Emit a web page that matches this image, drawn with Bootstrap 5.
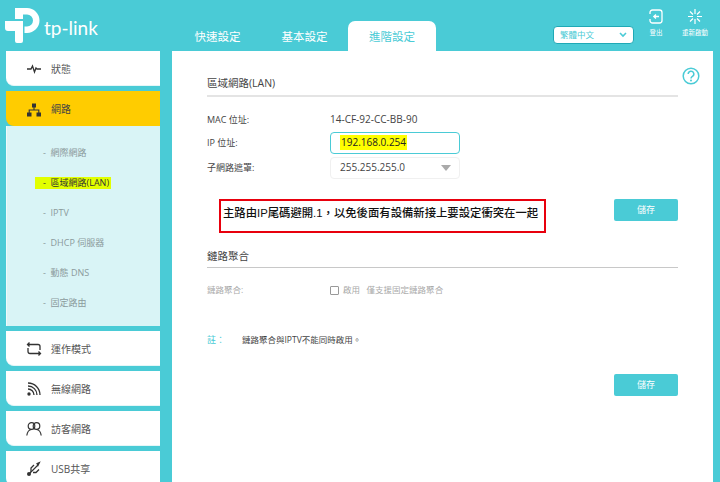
<!DOCTYPE html>
<html lang="zh-Hant">
<head>
  <meta charset="UTF-8">
  <meta name="viewport" content="width=device-width, initial-scale=1">
  <title>區域網路(LAN)</title>
  <link href="https://cdn.jsdelivr.net/npm/bootstrap@5.3.0/dist/css/bootstrap.min.css" rel="stylesheet">
  <style>
    html, body { height: 482px; overflow: hidden; }
    body { background: #4acbd6; font-family: "Open Sans", "Noto Sans CJK TC", sans-serif; font-size: 10px; color: #444; position: relative; }

    /* header */
    .top-bar { height: 51px; }
    .logo-box { width: 174px; flex-shrink: 0; }
    .logo-text { font-family: Lato, "Open Sans", sans-serif; font-size: 19px; line-height: 20px; color: #fff; margin: 18px 0 0 4px; }
    .tab-row { width: 263px; flex-shrink: 0; }
    .tab-item { color: #fff; font-size: 11.5px; height: 30px; line-height: 32px; text-align: center; width: 87px; margin-top: 21px; white-space: nowrap; }
    .tab-item.tab-on { background: #fff; color: #4acbd6; border-radius: 7px 7px 0 0; width: 88px; }
    .lang-box { width: 81px; height: 18px; margin: 26px 0 0 116px; flex-shrink: 0; background: #fff; border: 1px solid #1fa9b6; border-radius: 4px; color: #4acbd6; font-size: 8.5px; line-height: 16px; padding: 0 6px; }
    .top-icon { color: #fff; font-size: 6.5px; line-height: 9px; text-align: center; flex-shrink: 0; }
    .top-logout { width: 30px; margin: 9px 0 0 7px; }
    .top-reboot { width: 40px; margin: 9px 0 0 4px; }

    /* sidebar */
    .page-row { height: 431px; }
    .side-col { width: 154px; margin-left: 6px; gap: 5px; flex-shrink: 0; }
    .side-item { height: 35px; background: #fff; border-radius: 0 0 0 8px; border-bottom: 1px solid #e4f7f8; padding: 2px 0 0 20px; gap: 9px; color: #555; font-size: 10px; flex-shrink: 0; }
    .side-icon { width: 16px; height: 16px; flex-shrink: 0; }
    .side-item.side-on { background: #fc0; color: #444; border-bottom: 0; margin-bottom: -5px; }
    .side-sub { height: 200px; background: #d9f4f6; border-left: 1px solid #eefafb; padding: 12px 0 0 28px; flex-shrink: 0; }
    .sub-link { height: 30px; line-height: 30px; color: #8b9a9c; font-size: 9px; white-space: nowrap; }
    .sub-link span { display: inline-block; line-height: 12px; padding: 0 2px 0 8px; }
    .sub-link .sub-mark { background: #e2ff00; color: #333; }

    /* main panel */
    .main-panel { width: 541px; margin-left: 12px; background: #fff; position: relative; padding: 24px 35px 0; }
    .help-mark { position: absolute; left: 510px; top: 16px; width: 18px; height: 18px; }
    .sec-title { font-size: 10.5px; color: #444; line-height: 16px; padding-bottom: 4px; border-bottom: 2px solid #e4e4e4; }
    .sec-title.sec-two { border-bottom: 1px solid #c8c8c8; padding-bottom: 3px; margin-top: 15px; }
    .form-line { height: 25px; }
    .field-name { width: 123px; font-size: 9px; color: #444; flex-shrink: 0; }
    .field-box { width: 130px; height: 22px; border: 1px solid #f0f0f0; border-radius: 4px; padding: 0 9px; font-size: 10px; color: #444; }
    .field-box.field-on { border-color: #4acbd6; color: #222; }
    .ip-mark { background: #ff0; padding: 0 1px; }
    .arrow-down { width: 0; height: 0; border-left: 5px solid transparent; border-right: 5px solid transparent; border-top: 6px solid #aaa; margin-right: -1px; }
    .note-wrap { margin-top: 19px; }
    .note-red { width: 327px; height: 34px; margin: 0 0 0 12px; border: 2px solid #e8000d; color: #111; font-family: "Liberation Sans", "Noto Sans CJK TC", sans-serif; font-size: 11.350px; font-weight: 500; line-height: 25px; padding-left: 2px; white-space: nowrap; flex-shrink: 0; }
    .save-btn { width: 64px; height: 22px; padding: 0; background: #4acbd6; border: 0; border-radius: 2px; color: #fff; font-size: 9px; line-height: 22px; }
    .save-btn:hover { background: #4acbd6; color: #fff; }
    .box-tick { width: 9px; height: 9px; border: 1px solid #999; border-radius: 1px; margin-right: 4px; }
    .dim-text { color: #aaa; font-size: 8.5px; white-space: nowrap; }
    .agg-line { margin-top: 10px; }
    .note-line { margin-top: 29px; height: 16px; }
    .note-key { width: 35px; color: #4acbd6; font-size: 9px; }
    .note-txt { font-size: 8.5px; color: #444; }
    .save-line { margin-top: 26px; }
  </style>
</head>
<body>

  <!-- header -->
  <div class="top-bar d-flex">
    <div class="logo-box d-flex">
      <svg width="40" height="45" viewBox="0 0 40 45">
        <path fill="#fff" d="M15 8H27A12.500 12.500 0 0 1 27 33H24.500V26.500H27A6 6 0 0 0 27 14.500H23V19H15Z"/>
        <path fill="#fff" d="M5 21H23V41Q23 43 21 43H17Q15 43 15 41V31H8Q5 31 5 28Z"/>
      </svg>
      <div class="logo-text">tp-link</div>
    </div>
    <div class="tab-row d-flex">
      <div class="tab-item">快速設定</div>
      <div class="tab-item">基本設定</div>
      <div class="tab-item tab-on">進階設定</div>
    </div>
    <div class="lang-box d-flex justify-content-between align-items-center">
      <span>繁體中文</span>
      <svg width="8" height="6" viewBox="0 0 8 6"><path d="M1 1l3 3 3-3" fill="none" stroke="#4acbd6" stroke-width="1.600"/></svg>
    </div>
    <div class="top-icon top-logout">
      <svg class="d-block mx-auto" width="14" height="15" viewBox="0 0 14 15"><rect x="1" y="1" width="12" height="13" rx="2.500" fill="none" stroke="#fff" stroke-width="1.300"/><path d="M0 5h2v5H0z" fill="#4acbd6"/><path d="M10 7.500H5M7 5.500l-2.200 2 2.200 2" fill="none" stroke="#fff" stroke-width="1.300"/></svg>
      <div class="mt-1">登出</div>
    </div>
    <div class="top-icon top-reboot">
      <svg class="d-block mx-auto" width="16" height="15" viewBox="0 0 16 15"><path d="M8 0v5M8 10v5M1 7.500h5M10 7.500h5M3 2.500l3 3M10 9.500l3 3M13 2.500l-3 3M6 9.500l-3 3" stroke="#fff" stroke-width="1.200"/></svg>
      <div class="mt-1">重新啟動</div>
    </div>
  </div>

  <div class="page-row d-flex">
    <!-- sidebar -->
    <div class="side-col d-flex flex-column">
      <div class="side-item d-flex align-items-center">
        <svg class="side-icon" viewBox="0 0 16 16"><path d="M1 8h4l1.500-3 2 6 1.500-4 1 1h4" fill="none" stroke="#333" stroke-width="1.300"/></svg>
        <span>狀態</span>
      </div>
      <div class="side-item side-on d-flex align-items-center">
        <svg class="side-icon" viewBox="0 0 16 16"><path d="M6 1.500h4v4H6zM1 10.500h4.500v4H1zM10.500 10.500H15v4h-4.500z" fill="#333"/><path d="M8 5v3M3.200 11V8h9.600v3" fill="none" stroke="#333" stroke-width="1.100"/></svg>
        <span>網路</span>
      </div>
      <div class="side-sub">
        <div class="sub-link"><span>-&nbsp; 網際網路</span></div>
        <div class="sub-link"><span class="sub-mark">-&nbsp; 區域網路(LAN)</span></div>
        <div class="sub-link"><span>-&nbsp; IPTV</span></div>
        <div class="sub-link"><span>-&nbsp; DHCP 伺服器</span></div>
        <div class="sub-link"><span>-&nbsp; 動態 DNS</span></div>
        <div class="sub-link"><span>-&nbsp; 固定路由</span></div>
      </div>
      <div class="side-item d-flex align-items-center">
        <svg class="side-icon" viewBox="0 0 16 16"><path d="M3.500 1.500L1.500 3.500l2 2M2 3.500h10q2 0 2 2V9M12.500 14.500l2-2-2-2M14 12.500H4q-2 0-2-2V7" fill="none" stroke="#333" stroke-width="1.300"/></svg>
        <span>運作模式</span>
      </div>
      <div class="side-item d-flex align-items-center">
        <svg class="side-icon" viewBox="0 0 16 16"><circle cx="3" cy="13" r="1.700" fill="#333"/><path d="M2 8a6 6 0 0 1 6 6M2 5a9 9 0 0 1 9 9M2 2a12 12 0 0 1 12 12" fill="none" stroke="#333" stroke-width="1.300"/></svg>
        <span>無線網路</span>
      </div>
      <div class="side-item d-flex align-items-center">
        <svg class="side-icon" viewBox="0 0 16 16"><circle cx="5.500" cy="5" r="3.300" fill="none" stroke="#333" stroke-width="1.200"/><circle cx="10.500" cy="5" r="3.300" fill="none" stroke="#333" stroke-width="1.200"/><path d="M.8 14.500Q1.500 9 5.500 8.500M15.200 14.500Q14.500 9 10.500 8.500" fill="none" stroke="#333" stroke-width="1.200"/></svg>
        <span>訪客網路</span>
      </div>
      <div class="side-item d-flex align-items-center">
        <svg class="side-icon" viewBox="0 0 16 16"><path d="M13.500 1.500l-2.500 1 1 2zM3 13l9-9" fill="#333" stroke="#333" stroke-width="1.200"/><path d="M5 11V7l3-3M7 11.500h3l3-3" fill="none" stroke="#333" stroke-width="1.300"/><circle cx="3" cy="13" r="2" fill="#333"/></svg>
        <span>USB共享</span>
      </div>
    </div>

    <!-- main panel -->
    <div class="main-panel">
      <svg class="help-mark" viewBox="0 0 18 18"><circle cx="9" cy="9" r="7.800" fill="none" stroke="#4acbd6" stroke-width="1.500"/><path d="M6.200 7a2.800 2.800 0 1 1 4.200 2.400Q9 10.200 9 11.500" fill="none" stroke="#4acbd6" stroke-width="1.500"/><circle cx="9" cy="13.500" r="1" fill="#4acbd6"/></svg>

      <div class="sec-title">區域網路(LAN)</div>
      <div class="form-line d-flex align-items-center mt-2 pt-1">
        <div class="field-name">MAC 位址:</div>
        <div>14-CF-92-CC-BB-90</div>
      </div>
      <div class="form-line d-flex align-items-center">
        <div class="field-name">IP 位址:</div>
        <div class="field-box field-on d-flex align-items-center"><span class="ip-mark">192.168.0.254</span></div>
      </div>
      <div class="form-line d-flex align-items-center">
        <div class="field-name">子網路遮罩:</div>
        <div class="field-box d-flex align-items-center justify-content-between"><span>255.255.255.0</span><i class="arrow-down"></i></div>
      </div>

      <div class="note-wrap d-flex justify-content-between align-items-start">
        <div class="note-red">主路由IP尾碼避開.1，以免後面有設備新接上要設定衝突在一起</div>
        <button class="btn save-btn" type="button">儲存</button>
      </div>

      <div class="sec-title sec-two">鏈路聚合</div>
      <div class="form-line agg-line d-flex align-items-center">
        <div class="field-name dim-text">鏈路聚合:</div>
        <i class="box-tick d-block"></i>
        <div class="dim-text">啟用&nbsp;&nbsp;&nbsp;僅支援固定鏈路聚合</div>
      </div>
      <div class="note-line d-flex align-items-center">
        <div class="note-key">註：</div>
        <div class="note-txt">鏈路聚合與IPTV不能同時啟用。</div>
      </div>
      <div class="save-line d-flex justify-content-end">
        <button class="btn save-btn" type="button">儲存</button>
      </div>
    </div>
  </div>

  <script src="https://cdn.jsdelivr.net/npm/bootstrap@5.3.0/dist/js/bootstrap.bundle.min.js"></script>
</body>
</html>
